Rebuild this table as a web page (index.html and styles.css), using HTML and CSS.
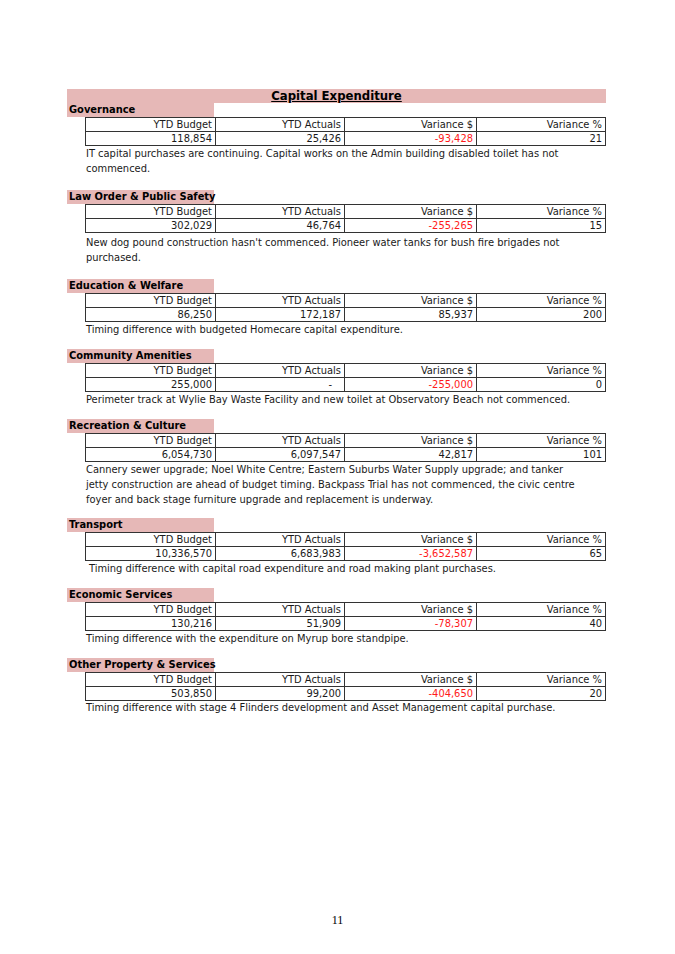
FILE: index.html
```html
<!DOCTYPE html>
<html>
<head>
<meta charset="utf-8">
<link rel="stylesheet" href="styles.css">
</head>
<body>
<div class="page">
  <div class="title-band"><span class="title">Capital Expenditure</span></div>

  <section class="sec sec-gov">
    <div class="label">Governance</div>
    <table class="tbl">
      <tr><td>YTD Budget</td><td>YTD Actuals</td><td>Variance $</td><td>Variance %</td></tr>
      <tr><td>118,854</td><td>25,426</td><td class="neg">-93,428</td><td>21</td></tr>
    </table>
    <p class="note">IT capital purchases are continuing. Capital works on the Admin building disabled toilet has not commenced.</p>
  </section>

  <section class="sec sec-law">
    <div class="label">Law Order &amp; Public Safety</div>
    <table class="tbl">
      <tr><td>YTD Budget</td><td>YTD Actuals</td><td>Variance $</td><td>Variance %</td></tr>
      <tr><td>302,029</td><td>46,764</td><td class="neg">-255,265</td><td>15</td></tr>
    </table>
    <p class="note note-low">New dog pound construction hasn't commenced. Pioneer water tanks for bush fire brigades not purchased.</p>
  </section>

  <section class="sec">
    <div class="label">Education &amp; Welfare</div>
    <table class="tbl">
      <tr><td>YTD Budget</td><td>YTD Actuals</td><td>Variance $</td><td>Variance %</td></tr>
      <tr><td>86,250</td><td>172,187</td><td>85,937</td><td>200</td></tr>
    </table>
    <p class="note">Timing difference with budgeted Homecare capital expenditure.</p>
  </section>

  <section class="sec">
    <div class="label">Community Amenities</div>
    <table class="tbl">
      <tr><td>YTD Budget</td><td>YTD Actuals</td><td>Variance $</td><td>Variance %</td></tr>
      <tr><td>255,000</td><td class="dash">-</td><td class="neg">-255,000</td><td>0</td></tr>
    </table>
    <p class="note">Perimeter track at Wylie Bay Waste Facility and new toilet at Observatory Beach not commenced.</p>
  </section>

  <section class="sec sec-rec">
    <div class="label">Recreation &amp; Culture</div>
    <table class="tbl">
      <tr><td>YTD Budget</td><td>YTD Actuals</td><td>Variance $</td><td>Variance %</td></tr>
      <tr><td>6,054,730</td><td>6,097,547</td><td>42,817</td><td>101</td></tr>
    </table>
    <p class="note">Cannery sewer upgrade; Noel White Centre; Eastern Suburbs Water Supply upgrade; and tanker jetty construction are ahead of budget timing. Backpass Trial has not commenced, the civic centre foyer and back stage furniture upgrade and replacement is underway.</p>
  </section>

  <section class="sec">
    <div class="label">Transport</div>
    <table class="tbl">
      <tr><td>YTD Budget</td><td>YTD Actuals</td><td>Variance $</td><td>Variance %</td></tr>
      <tr><td>10,336,570</td><td>6,683,983</td><td class="neg">-3,652,587</td><td>65</td></tr>
    </table>
    <p class="note indent">Timing difference with capital road expenditure and road making plant purchases.</p>
  </section>

  <section class="sec">
    <div class="label">Economic Services</div>
    <table class="tbl">
      <tr><td>YTD Budget</td><td>YTD Actuals</td><td>Variance $</td><td>Variance %</td></tr>
      <tr><td>130,216</td><td>51,909</td><td class="neg">-78,307</td><td>40</td></tr>
    </table>
    <p class="note">Timing difference with the expenditure on Myrup bore standpipe.</p>
  </section>

  <section class="sec">
    <div class="label">Other Property &amp; Services</div>
    <table class="tbl">
      <tr><td>YTD Budget</td><td>YTD Actuals</td><td>Variance $</td><td>Variance %</td></tr>
      <tr><td>503,850</td><td>99,200</td><td class="neg">-404,650</td><td>20</td></tr>
    </table>
    <p class="note note-tight">Timing difference with stage 4 Flinders development and Asset Management capital purchase.</p>
  </section>

  <div class="pagenum">11</div>
</div>
</body>
</html>
```

FILE: styles.css
```css
html, body {
  margin: 0;
  padding: 0;
  background: #ffffff;
}
body {
  width: 675px;
  height: 954px;
  font-family: "DejaVu Sans Condensed", "DejaVu Sans", sans-serif;
  font-size: 11px;
  color: #1a1a1a;
}
.page {
  padding: 89px 0 0 67px;
  width: 539px;
}
.title-band {
  background: #e6b8b7;
  height: 14px;
  line-height: 14px;
  text-align: center;
}
.title {
  font-weight: bold;
  font-size: 13px;
  text-decoration: underline;
  color: #000;
}
.sec {
  margin: 0 0 12px 0;
}
.sec-gov { margin-bottom: 14px; }
.sec-law { margin-bottom: 14px; }
.sec-rec { margin-bottom: 11px; }
.label {
  width: 147px;
  height: 14px;
  line-height: 14px;
  background: #e6b8b7;
  font-weight: bold;
  color: #000;
  padding-left: 2px;
  box-sizing: border-box;
  white-space: nowrap;
}
.tbl {
  margin-left: 18px;
  width: 521px;
  border-collapse: collapse;
  table-layout: fixed;
}
.tbl td {
  border: 1px solid #333;
  height: 13px;
  line-height: 13px;
  padding: 0 3px 0 0;
  text-align: right;
  font-size: 11px;
  color: #1a1a1a;
}
.tbl td:nth-child(1) { width: 126px; }
.tbl td:nth-child(2) { width: 125px; }
.tbl td:nth-child(3) { width: 128px; }
.tbl td.neg { color: #ff1a1a; }
.tbl td.dash { padding-right: 12px; }
.note {
  margin: 0 0 0 19px;
  width: 500px;
  line-height: 15px;
}
.note.note-low {
  padding-top: 2px;
}
.note.note-tight {
  margin-top: -1px;
}
.note.indent {
  padding-left: 3px;
}
.pagenum {
  position: absolute;
  top: 913px;
  left: 0;
  width: 675px;
  text-align: center;
  font-family: "Liberation Serif", serif;
  font-size: 12px;
  color: #000;
}
```
